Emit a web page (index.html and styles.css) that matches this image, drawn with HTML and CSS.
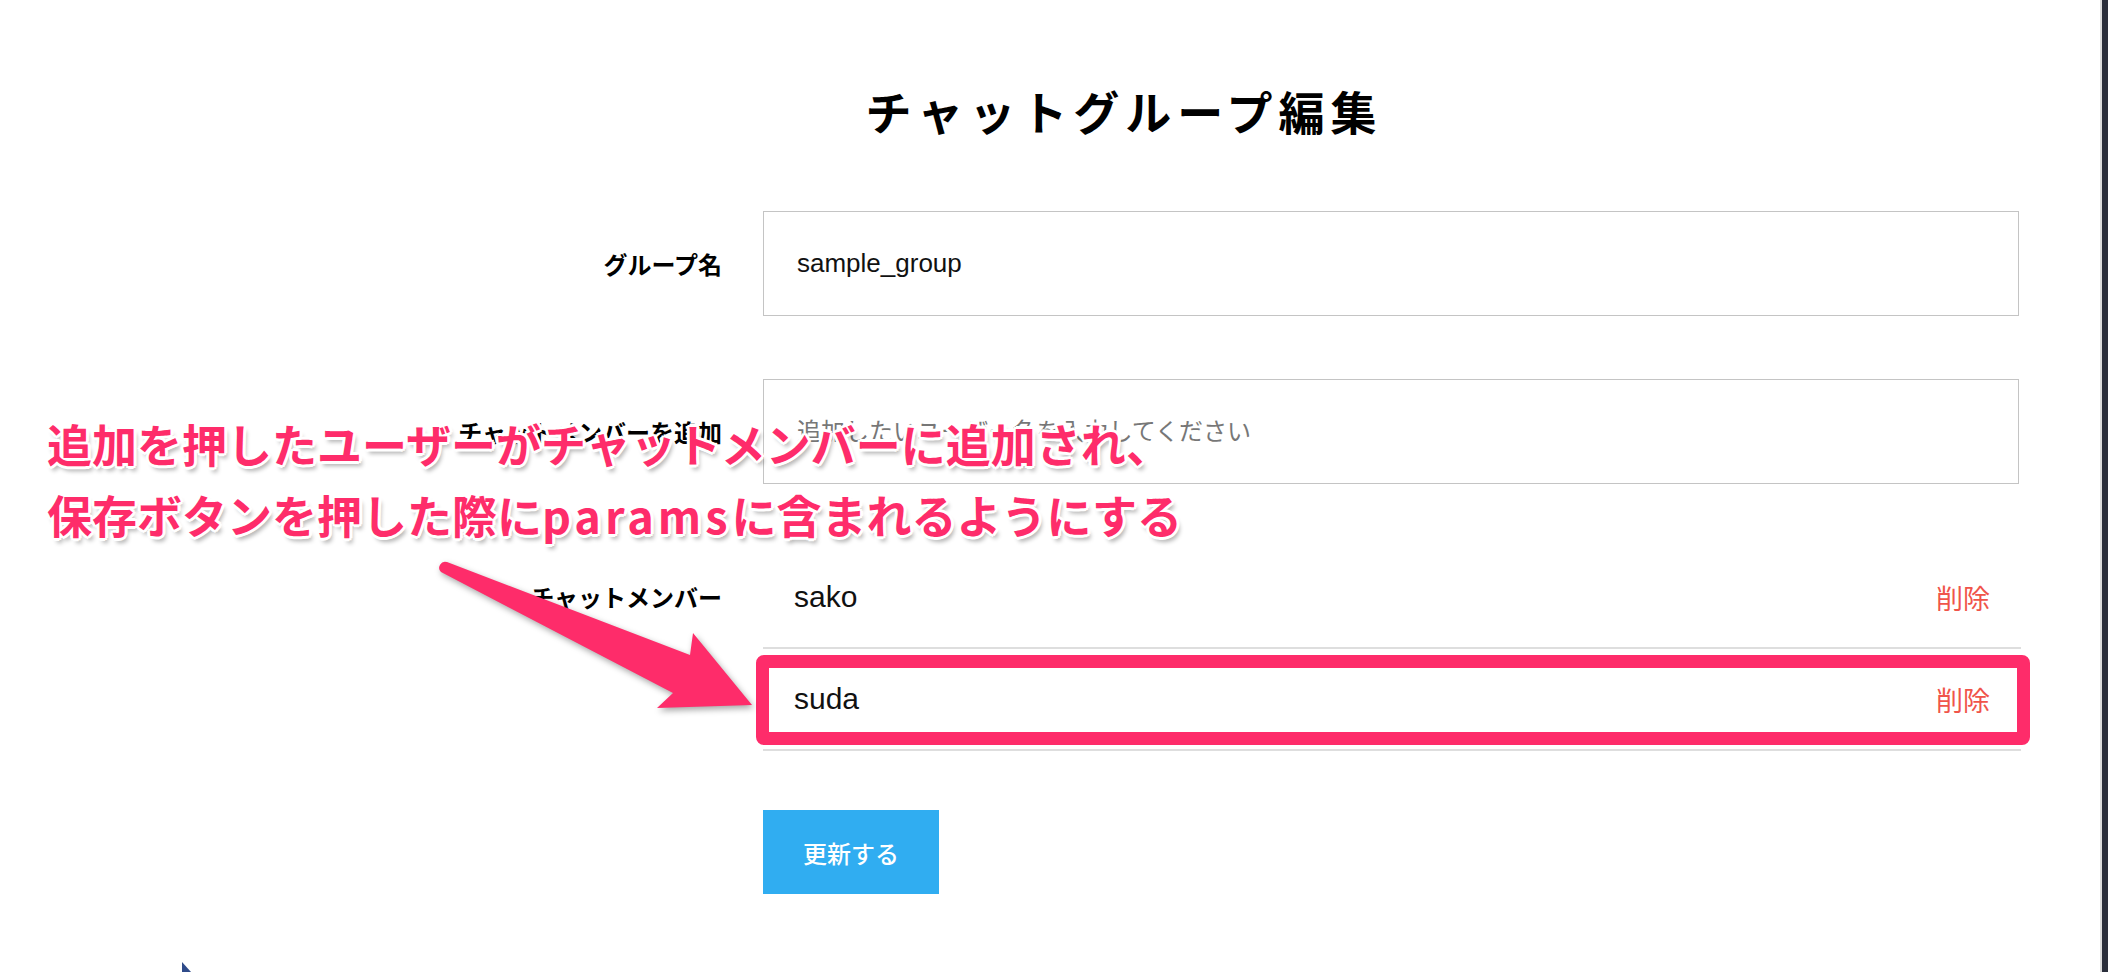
FILE: index.html
```html
<!DOCTYPE html>
<html lang="ja">
<head>
<meta charset="utf-8">
<title>チャットグループ編集</title>
<link rel="stylesheet" href="styles.css">
</head>
<body>
<div class="page">
  <main class="main">
    <div class="container">
      <h1 class="title">チャットグループ編集</h1>
      <form class="form">
        <div class="row">
          <label class="label">グループ名</label>
          <input class="input" type="text" value="sample_group">
        </div>
        <div class="row">
          <label class="label">チャットメンバーを追加</label>
          <input class="input" type="text" placeholder="追加したいユーザー名を入力してください">
        </div>
        <div class="row row-top">
          <label class="label label-members">チャットメンバー</label>
          <ul class="members">
            <li class="member"><span class="member-name">sako</span><span class="member-remove">削除</span></li>
            <li class="member"><span class="member-name">suda</span><span class="member-remove">削除</span></li>
          </ul>
        </div>
        <div class="row row-actions">
          <span class="label"></span>
          <div class="actions"><button class="submit" type="button">更新する</button></div>
        </div>
      </form>
    </div>
  </main>
  <div class="side-strip"></div>
</div>

<div class="highlight-box"></div>

<svg class="arrow-overlay" width="2108" height="972" viewBox="0 0 2108 972">
  <path class="arrow" d="M 447 562 L 690 655 L 693 633 L 752 705 L 657 708 L 673 693 L 441 572 A 6 6 0 0 1 447 562 Z"/>
</svg>

<div class="annotation">
  <div class="annotation-line">追加を押したユーザーがチャットメンバーに追加され、</div>
  <div class="annotation-line">保存ボタンを押した際に<span class="annotation-latin">params</span>に含まれるようにする</div>
</div>

<div class="corner-mark"></div>
</body>
</html>
```

FILE: styles.css
```css
* {
  box-sizing: border-box;
}

html, body {
  margin: 0;
  padding: 0;
  width: 2108px;
  height: 972px;
  overflow: hidden;
  background: #ffffff;
  font-family: "Liberation Sans", "Noto Sans CJK JP", sans-serif;
  color: #111111;
}

.page {
  display: flex;
  width: 2108px;
  height: 972px;
}

.main {
  flex: 1;
  background: #ffffff;
}

.side-strip {
  width: 8px;
  background: #2b2f3b;
  border-left: 2px solid #dcdcdc;
}

.container {
  margin-left: 223px;
  width: 1796px;
  padding-top: 87px;
}

.title {
  margin: 0 0 78px 0;
  text-align: center;
  font-family: "Noto Sans CJK JP", sans-serif;
  font-weight: 700;
  font-size: 46px;
  line-height: 46px;
  letter-spacing: 6px;
  padding-left: 6px;
  color: #000000;
}

.form {
  display: flex;
  flex-direction: column;
  gap: 63px;
}

.row {
  display: grid;
  grid-template-columns: 499px 1fr;
  column-gap: 41px;
  align-items: center;
}

.row-top {
  align-items: start;
}

.row-actions {
  margin-top: -4px;
}

.label {
  text-align: right;
  font-family: "Noto Sans CJK JP", sans-serif;
  font-weight: 700;
  font-size: 24px;
  line-height: 30px;
  color: #000000;
}

.label-members {
  line-height: 100px;
}

.input {
  display: block;
  width: 100%;
  height: 105px;
  margin: 0;
  border: 1px solid #c4c4c4;
  border-radius: 0;
  padding: 0 0 0 33px;
  font-family: "Liberation Sans", "Noto Sans CJK JP", sans-serif;
  font-size: 26px;
  color: #111111;
  background: #ffffff;
  outline: none;
}

.input::placeholder {
  font-family: "Noto Sans CJK JP", sans-serif;
  font-size: 24px;
  color: #777777;
}

.members {
  list-style: none;
  margin: 0;
  padding: 0;
  width: 1258px;
}

.member {
  display: flex;
  align-items: center;
  justify-content: space-between;
  height: 102px;
  padding: 0 31px 0 31px;
  border-bottom: 2px solid #dedede;
}

.member-name {
  font-family: "Liberation Sans", sans-serif;
  font-size: 30px;
  color: #111111;
}

.member-remove {
  font-family: "Noto Sans CJK JP", sans-serif;
  font-size: 27px;
  color: #f0544a;
  cursor: pointer;
}

.actions {
  display: flex;
}

.submit {
  width: 176px;
  height: 84px;
  border: none;
  border-radius: 0;
  background: #30adf1;
  color: #ffffff;
  font-family: "Noto Sans CJK JP", sans-serif;
  font-weight: 500;
  font-size: 24px;
  padding: 0;
}

.highlight-box {
  position: absolute;
  left: 756px;
  top: 655px;
  width: 1274px;
  height: 90px;
  border: 13px solid #fe2c6a;
  border-radius: 8px;
}

.arrow-overlay {
  position: absolute;
  left: 0;
  top: 0;
  pointer-events: none;
  overflow: visible;
}

.arrow {
  fill: #fe2c6a;
  filter: drop-shadow(2px 3px 3px rgba(0, 0, 0, 0.35));
}

.annotation {
  position: absolute;
  left: 47px;
  top: 408px;
  font-family: "Noto Sans CJK JP", sans-serif;
  font-weight: 700;
  font-size: 45px;
  line-height: 71px;
  color: #fe2c6a;
  white-space: nowrap;
  text-shadow:
    3px 0 0 #fff, -3px 0 0 #fff, 0 3px 0 #fff, 0 -3px 0 #fff,
    2px 2px 0 #fff, -2px 2px 0 #fff, 2px -2px 0 #fff, -2px -2px 0 #fff,
    3px 5px 4px rgba(0, 0, 0, 0.3);
}

.annotation-latin {
  letter-spacing: 4px;
}

.corner-mark {
  position: absolute;
  left: 182px;
  top: 962px;
  width: 9px;
  height: 10px;
  background: #2f4b8a;
  clip-path: polygon(0 0, 100% 100%, 0 100%);
}
```
